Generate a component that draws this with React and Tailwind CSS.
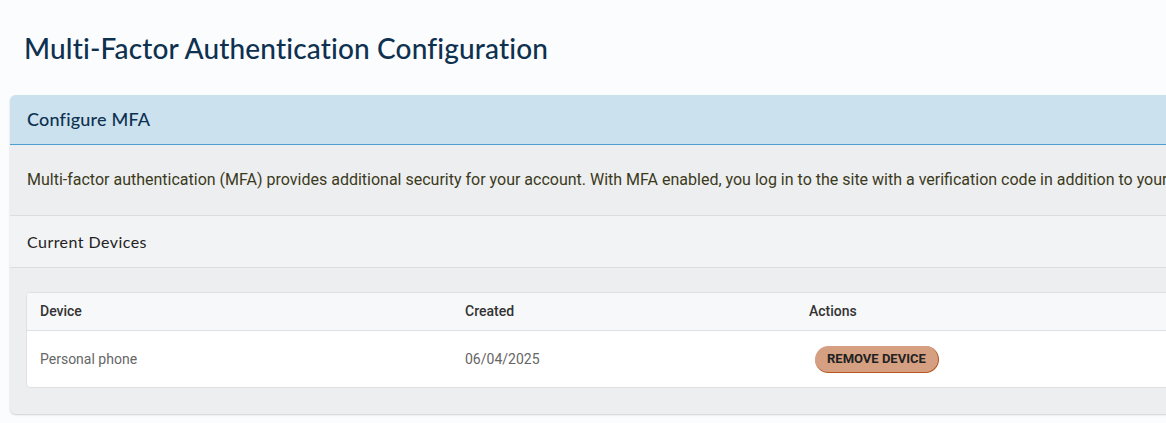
import React from 'react';

const devices = [{ name: 'Personal phone', created: '06/04/2025' }];

const App = () => {
  return (
    <div className="w-screen h-[423px] overflow-hidden bg-[#fbfcfe] font-['Roboto',sans-serif]">
      <div className="w-[1500px] pl-[10px] pt-[30px]">
        <h1 className="pl-[14px] h-[65px] text-[28px] leading-[36px] font-medium text-[#0e3150] font-['Lato',sans-serif] tracking-[0.15px]">
          Multi-Factor Authentication Configuration
        </h1>

        {/* card */}
        <div className="rounded-[6px] overflow-hidden bg-[#edeef0] shadow-[0_1px_2px_rgba(0,0,0,0.18)]">
          <div className="h-[50px] flex items-center px-[17px] bg-[#cbe1ee] border-b border-[#4d9fd3]">
            <h2 className="text-[18px] font-medium text-[#0e3150] font-['Lato',sans-serif] tracking-[0.2px]">Configure MFA</h2>
          </div>

          <div className="h-[71px] flex items-center px-[17px] border-b border-[#dcdde0]">
            <p className="text-[16px] text-[#3b3a1c] whitespace-nowrap">
              Multi-factor authentication (MFA) provides additional security for your account. With MFA enabled, you log in to the site with a verification code in addition to your password.
            </p>
          </div>

          <div className="h-[52px] flex items-center px-[17px] bg-[#f2f3f5] border-b border-[#dcdde0]">
            <h3 className="text-[16px] text-[#222] font-['Lato',sans-serif] tracking-[0.45px]">Current Devices</h3>
          </div>

          <div className="px-[16px] pt-[24px] pb-[26px]">
            <div className="rounded-[4px] border border-[#dfe0e3] bg-white overflow-hidden">
              <div className="flex h-[38px] items-center bg-[#f7f8fa] border-b border-[#dfe0e3] text-[14px] font-medium text-[#333]">
                <div className="w-[438px] pl-[13px]">Device</div>
                <div className="w-[344px]">Created</div>
                <div>Actions</div>
              </div>
              {devices.map((d) => (
                <div key={d.name} className="flex h-[56px] items-center text-[14px] text-[#666]">
                  <div className="w-[438px] pl-[13px]">{d.name}</div>
                  <div className="w-[350px]">{d.created}</div>
                  <div>
                    <button className="h-[27px] px-[12px] rounded-full bg-[#d5a082] border-b border-r border-[#b9561c] text-[13px] font-bold uppercase text-[#222] leading-none">
                      Remove Device
                    </button>
                  </div>
                </div>
              ))}
            </div>
          </div>
        </div>
      </div>
    </div>
  );
};

export default App;
